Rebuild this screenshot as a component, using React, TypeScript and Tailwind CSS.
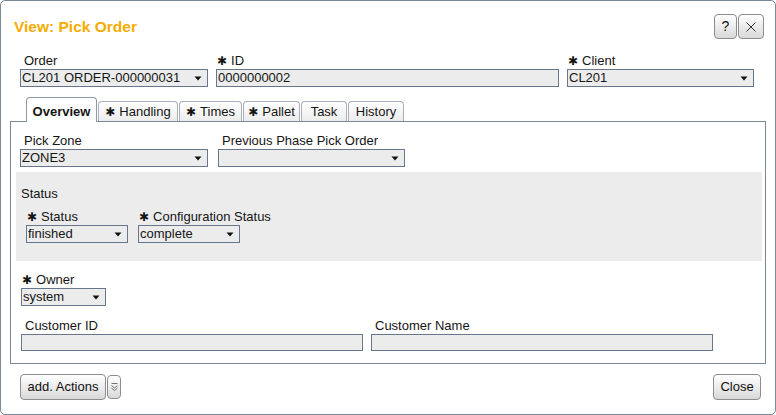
import { ReactNode } from "react";

const Star = () => (
  <span className="mr-[4px] inline-block font-['DejaVu_Sans',sans-serif] text-[12px] leading-none">✱</span>
);

const Label = ({ text, star }: { text: string; star?: boolean }) => (
  <div className={`h-[16px] whitespace-nowrap leading-[16px] ${star ? "pl-[1px]" : "pl-[4px]"}`}>
    {star && <Star />}
    {text}
  </div>
);

const Arrow = () => (
  <svg width="8" height="5" viewBox="0 0 8 5" className="mr-[5px] shrink-0">
    <path d="M0.5 0.5 H7.5 L4 4.5 Z" fill="#111" />
  </svg>
);

const Select = ({ value, width }: { value: string; width: string }) => (
  <div className={`flex h-[18px] items-center border border-[#67758d] bg-[#ececec] pl-[1px] ${width}`}>
    <span className="flex-1 truncate leading-[16px]">{value}</span>
    <Arrow />
  </div>
);

const Input = ({ value, width, height = "h-[18px]" }: { value?: string; width: string; height?: string }) => (
  <div className={`flex items-center border border-[#67758d] bg-[#ececec] pl-[1px] ${width} ${height}`}>
    <span className="leading-[16px]">{value}</span>
  </div>
);

const Field = ({ label, star, children }: { label: string; star?: boolean; children: ReactNode }) => (
  <div className="flex flex-col">
    <Label text={label} star={star} />
    {children}
  </div>
);

const tabs = [
  { name: "Handling", star: true, w: "w-[80px]" },
  { name: "Times", star: true, w: "w-[63px]" },
  { name: "Pallet", star: true, w: "w-[57px]" },
  { name: "Task", star: false, w: "w-[46px]" },
  { name: "History", star: false, w: "w-[56px]" },
];

const btn =
  "flex items-center justify-center rounded-[4px] border border-[#8d8d8d] bg-linear-to-b from-white to-[#d9d9d9] text-[#111]";

export default function App() {
  return (
    <div className="h-[415px] w-[776px] bg-white font-['Liberation_Sans',Arial,sans-serif] text-[13px] text-[#151515]">
      <div className="flex h-full flex-col rounded-[5px] border border-[#7b879b]">
        <div className="flex items-center justify-between pl-[13px] pr-[11px] pt-[13px]">
          <h1 className="text-[15.5px] font-bold leading-[18px] text-[#f5ac00]">View: Pick Order</h1>
          <div className="flex gap-[1px]">
            <button type="button" className={`${btn} h-[25px] w-[23px] text-[14px]`}>
              ?
            </button>
            <button type="button" className={`${btn} h-[25px] w-[26px]`}>
              <svg width="12" height="12" viewBox="0 0 12 12">
                <path d="M1.5 1.5 L10.5 10.5 M10.5 1.5 L1.5 10.5" stroke="#333" strokeWidth="1" />
              </svg>
            </button>
          </div>
        </div>

        <div className="mt-[14px] flex pl-[19px]">
          <Field label="Order">
            <Select value="CL201 ORDER-000000031" width="w-[188px]" />
          </Field>
          <div className="ml-[8px]">
            <Field label="ID" star>
              <Input value="0000000002" width="w-[343px]" />
            </Field>
          </div>
          <div className="ml-[8px]">
            <Field label="Client" star>
              <Select value="CL201" width="w-[187px]" />
            </Field>
          </div>
        </div>

        <div className="mt-[10px] flex h-[24px] items-end gap-[1px] pl-[25px]">
          <div className="relative z-10 -mb-px flex h-[25px] w-[71px] items-center justify-center rounded-t-[4px] border border-b-0 border-[#8d97a8] bg-white pt-[3px] font-bold">
            Overview
          </div>
          {tabs.map((tab) => (
            <div
              key={tab.name}
              className={`flex h-[20px] items-center justify-center whitespace-nowrap rounded-t-[4px] border border-b-0 border-[#a9b0bc] bg-linear-to-b from-white to-[#ececec] pt-[1px] ${tab.w}`}
            >
              {tab.star && <Star />}
              {tab.name}
            </div>
          ))}
        </div>

        <div className="ml-[9px] flex h-[243px] w-[756px] flex-col border border-[#7b879b]">
          <div className="mt-[11px] flex pl-[9px]">
            <Field label="Pick Zone">
              <Select value="ZONE3" width="w-[188px]" />
            </Field>
            <div className="ml-[10px]">
              <Field label="Previous Phase Pick Order">
                <Select value="" width="w-[187px]" />
              </Field>
            </div>
          </div>

          <div className="ml-[5px] mt-[5px] flex h-[89px] w-[746px] flex-col bg-[#ececec] pl-[5px] pt-[14px]">
            <div className="h-[16px] leading-[16px]">Status</div>
            <div className="mt-[7px] flex gap-[10px] pl-[5px]">
              <Field label="Status" star>
                <Select value="finished" width="w-[102px]" />
              </Field>
              <Field label="Configuration Status" star>
                <Select value="complete" width="w-[102px]" />
              </Field>
            </div>
          </div>

          <div className="ml-[10px] mt-[11px]">
            <Field label="Owner" star>
              <Select value="system" width="w-[85px]" />
            </Field>
          </div>

          <div className="ml-[10px] mt-[12px] flex gap-[8px]">
            <Field label="Customer ID">
              <Input width="w-[342px]" height="h-[17px]" />
            </Field>
            <Field label="Customer Name">
              <Input width="w-[342px]" height="h-[17px]" />
            </Field>
          </div>
        </div>

        <div className="mt-[10px] flex items-center justify-between pl-[19px] pr-[14px]">
          <div className="flex items-center gap-[1px]">
            <button type="button" className={`${btn} h-[26px] w-[86px]`}>
              add. Actions
            </button>
            <button type="button" className={`${btn} h-[24px] w-[14px]`}>
              <svg width="7" height="9" viewBox="0 0 7 9">
                <path d="M0.5 0.5 H6.5 M0.5 2.5 L3.5 5 L6.5 2.5 M0.5 5 L3.5 7.5 L6.5 5" stroke="#666" strokeWidth="0.9" fill="none" />
              </svg>
            </button>
          </div>
          <button type="button" className={`${btn} h-[26px] w-[48px]`}>
            Close
          </button>
        </div>
      </div>
    </div>
  );
}
